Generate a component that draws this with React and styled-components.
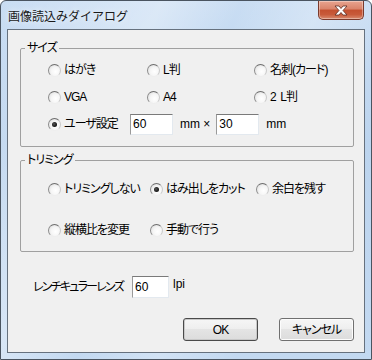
import React from "react";
import styled, { createGlobalStyle, css } from "styled-components";

const Global = createGlobalStyle`
  html, body { margin: 0; padding: 0; background: #ffffff; }
  body {
    font-family: "Liberation Sans", "Noto Sans CJK JP", sans-serif;
    font-size: 12px;
    color: #000;
    font-feature-settings: "palt";
  }
  * { box-sizing: border-box; }
`;

const Window = styled.div`
  width: 372px;
  height: 360px;
  border: 1px solid #4a5460;
  border-radius: 6px 6px 0 0;
  padding: 0 6px 6px 6px;
  display: flex;
  flex-direction: column;
  background:
    linear-gradient(115deg, rgba(255,255,255,0) 0%, rgba(255,255,255,0.35) 30%, rgba(255,255,255,0) 45%, rgba(255,255,255,0.25) 60%, rgba(255,255,255,0) 75%),
    linear-gradient(180deg, #c9ddf3 0%, #bcd4ee 40%, #c3d9f1 100%);
`;

const TitleBar = styled.div`
  height: 28px;
  display: flex;
  align-items: flex-start;
  justify-content: space-between;
`;

const Title = styled.div`
  margin-top: 8px;
  padding-left: 1px;
  font-family: "Noto Sans CJK JP", sans-serif;
  font-feature-settings: normal;
  font-size: 12px;
  line-height: 14px;
  color: #1a1a1a;
  text-shadow: 0 0 6px rgba(255,255,255,0.9);
`;

const CloseButton = styled.div`
  width: 46px;
  height: 19px;
  margin-right: 1px;
  border: 1px solid #7a3a2c;
  border-top: none;
  border-radius: 0 0 5px 5px;
  background: linear-gradient(180deg, #e8a48f 0%, #d9836a 45%, #c4502f 50%, #c85a3a 75%, #d98a6e 100%);
  display: flex;
  align-items: center;
  justify-content: center;
  box-shadow: inset 0 0 0 1px rgba(255,255,255,0.35);
`;

const Client = styled.div`
  flex: 1;
  border: 1px solid #66717e;
  background: #f0f0f0;
  display: flex;
  flex-direction: column;
  letter-spacing: -1px;
`;

const Group = styled.div`
  position: relative;
  margin: ${p => p.$top}px 10px 0 12px;
  height: ${p => p.$height}px;
  border: 1px solid #a0a0a0;
  border-radius: 2px;
`;

const Legend = styled.span`
  position: absolute;
  top: -8px;
  left: 4px;
  padding: 0 2px;
  line-height: 14px;
  background: #f0f0f0;
`;

const Grid = styled.div`
  display: grid;
  grid-template-columns: ${p => p.$cols};
  grid-template-rows: ${p => p.$rows};
  row-gap: ${p => p.$gap}px;
  padding: ${p => p.$pt}px 0 0 27px;
`;

const Option = styled.label`
  display: flex;
  align-items: center;
  gap: 3px;
  height: 20px;
  line-height: 14px;
  white-space: pre;
  ${p => p.$span && css`grid-column: 1 / -1;`}
`;

const RadioDot = styled.span`
  width: 13px;
  height: 13px;
  border-radius: 50%;
  border: 1px solid;
  border-color: #6d6d6d #c9c9c9 #eeeeee #8a8a8a;
  background: radial-gradient(circle at 60% 60%, #ffffff 0%, #f6f6f6 45%, #d8d8d8 100%);
  display: inline-flex;
  align-items: center;
  justify-content: center;
  flex-shrink: 0;
  &::after {
    content: "";
    width: 5px;
    height: 5px;
    border-radius: 50%;
    background: ${p => (p.$checked ? "radial-gradient(circle at 40% 40%, #555 0%, #111 70%)" : "transparent")};
  }
`;

const FixedLabel = styled.span`
  width: ${p => p.$w}px;
`;

const TextBox = styled.div`
  width: ${p => p.$w}px;
  height: ${p => p.$h}px;
  margin-left: ${p => p.$ml || 0}px;
  border: 1px solid;
  border-color: #7a7a7a #e3e9ef #e3e9ef #9a9a9a;
  background: #fff;
  padding: 0 2px;
  display: flex;
  align-items: center;
  line-height: 14px;
  letter-spacing: 0;
  color: #000;
  flex-shrink: 0;
`;

const Unit = styled.span`
  margin-left: 4px;
  line-height: 14px;
  letter-spacing: 0;
  ${p => p.$raise && css`align-self: flex-start; margin-top: 1px;`}
`;

const LensRow = styled.div`
  display: flex;
  align-items: center;
  margin: 24px 0 0 25px;
  height: 22px;
`;

const LensLabel = styled.span`
  white-space: nowrap;
  width: 99px;
  flex-shrink: 0;
  letter-spacing: -1.8px;
  line-height: 14px;
`;

const Buttons = styled.div`
  display: flex;
  justify-content: flex-end;
  gap: 21px;
  margin: 20px 10px 0 0;
`;

const Button = styled.div`
  width: 75px;
  height: 23px;
  border: 1px solid ${p => (p.$default ? "#4a4a4a" : "#707070")};
  border-radius: 3px;
  background: linear-gradient(180deg, #f6f6f6 0%, #eeeeee 49%, #e4e4e4 50%, #dcdcdc 100%);
  box-shadow: inset 0 0 0 1px ${p => (p.$default ? "#c8c8c8" : "#fcfcfc")};
  display: flex;
  align-items: center;
  justify-content: center;
  line-height: 14px;
`;

function Radio({ checked, children, span }) {
  return (
    <Option $span={span}>
      <RadioDot $checked={checked} />
      <span>{children}</span>
    </Option>
  );
}

export default function App() {
  return (
    <>
      <Global />
      <Window>
        <TitleBar>
          <Title>画像読込みダイアログ</Title>
          <CloseButton>
            <svg width="16" height="11" viewBox="0 0 16 11">
              <path d="M2 1 L6 1 L8 3.5 L10 1 L14 1 L10 5.5 L14 10 L10 10 L8 7.5 L6 10 L2 10 L6 5.5 Z" fill="#ffffff" stroke="#5a2a20" strokeWidth="0.8" strokeLinejoin="round" />
            </svg>
          </CloseButton>
        </TitleBar>
        <Client>
          <Group $top={18} $height={99}>
            <Legend>サイズ</Legend>
            <Grid $cols="99px 107px 1fr" $rows="20px 20px 21px" $gap={7} $pt={11}>
              <Radio>はがき</Radio>
              <Radio>L判</Radio>
              <Radio>名刺(カード)</Radio>
              <Radio>VGA</Radio>
              <Radio>A4</Radio>
              <Radio>2  L判</Radio>
              <Option $span>
                <RadioDot $checked />
                <FixedLabel $w={62}>ユーザ設定</FixedLabel>
                <TextBox $w={43} $h={21} $ml={1}>60</TextBox>
                <Unit>mm ×</Unit>
                <TextBox $w={43} $h={21} $ml={3}>30</TextBox>
                <Unit>mm</Unit>
              </Option>
            </Grid>
          </Group>
          <Group $top={13} $height={92}>
            <Legend>トリミング</Legend>
            <Grid $cols="102px 106px 1fr" $rows="20px 20px" $gap={21} $pt={18}>
              <Radio>トリミングしない</Radio>
              <Radio checked>はみ出しをカット</Radio>
              <Radio>余白を残す</Radio>
              <Radio>縦横比を変更</Radio>
              <Radio>手動で行う</Radio>
            </Grid>
          </Group>
          <LensRow>
            <LensLabel>レンチキュラーレンズ</LensLabel>
            <TextBox $w={37} $h={22}>60</TextBox>
            <Unit $raise>lpi</Unit>
          </LensRow>
          <Buttons>
            <Button $default>OK</Button>
            <Button>キャンセル</Button>
          </Buttons>
        </Client>
      </Window>
    </>
  );
}
